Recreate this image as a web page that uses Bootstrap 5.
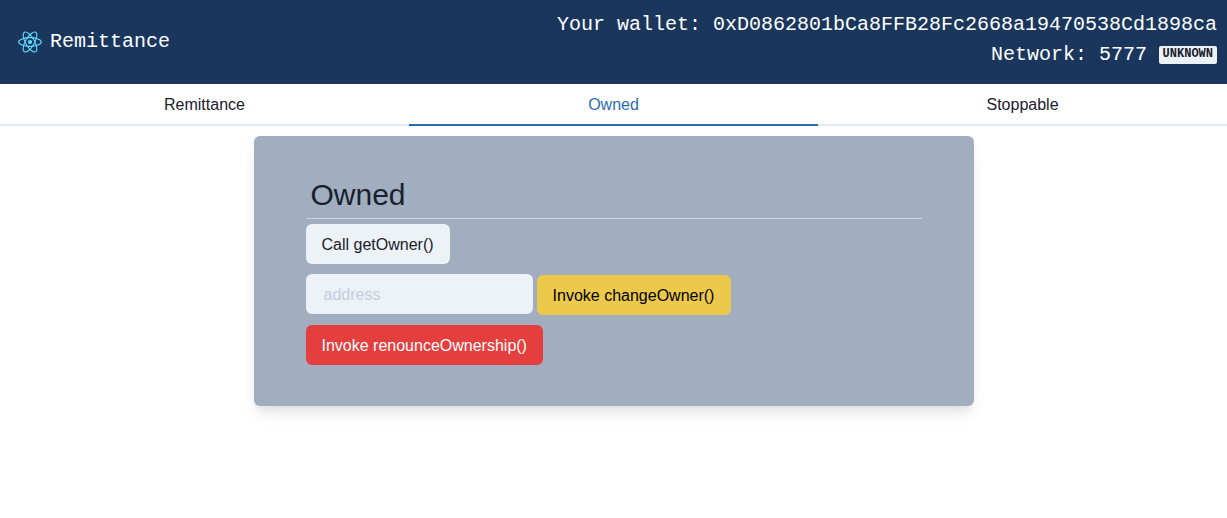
<!DOCTYPE html>
<html lang="en"><head><meta charset="utf-8"><title>Remittance</title>
<meta name="viewport" content="width=device-width, initial-scale=1">
<link href="https://cdn.jsdelivr.net/npm/bootstrap@5.3.0/dist/css/bootstrap.min.css" rel="stylesheet">
<style>
body{font-family:"Liberation Sans",Arial,sans-serif;color:#1a202c;background:#fff}
.topbar{height:84px;padding:0 10px 0 14px;background:#1a365d;color:#fff;font:20px/30px "Liberation Mono",monospace}
.logo{width:32px;height:32px}
.wallet{padding-bottom:5px}
.net-badge{font-size:12px;line-height:17px;font-weight:700;background:#edf2f7;color:#1a202c;border-radius:2px;padding:0 4px 0 3.6px;margin-left:12px;height:18px}
.tabs .nav-link{height:42px;padding:9px 16px 7px;line-height:24px;color:#1a202c;border-radius:0;border-bottom:2px solid #e2e8f0}
.tabs .nav-link.active{color:#2b6cb0;border-color:#2b6cb0}
.panel{width:720px;height:270px;margin-top:10px;padding:40px 52px;background:#a0aec0;border-radius:6px;box-shadow:0 10px 15px -3px rgba(0,0,0,.1),0 4px 6px -2px rgba(0,0,0,.05)}
.panel h1{font-size:30px;line-height:36px;font-weight:400;margin:0 0 5px;padding:1px 5px 5px;border-bottom:1px solid #cbd5e0}
.panel .btn{height:40px;padding:1px 16px 0;border:0;border-radius:6px;font-size:16px;line-height:39px}
.b-light{background:#edf2f7!important;color:#1a202c!important}
.b-yellow{background:#ecc94b!important;color:#000!important}
.b-red{background:#e53e3e!important;color:#fff!important}
.change-row{margin-top:10px;height:41px}
.change-row .btn{width:194px}
.panel .addr{width:227px;height:40px;background:#edf2f7;border:0;border-radius:6px;padding:2px 18px 0;line-height:38px}
.panel .addr::placeholder{color:#c4cddc}
.renounce-row{margin-top:10px}
</style></head><body class="min-vh-100">
<header class="topbar d-flex justify-content-between align-items-center">
<div class="d-flex align-items-center gap-1">
<svg class="logo" viewBox="-16 -16 32 32" fill="none" stroke="#61dafb" stroke-width="1.1"><circle r="2.1" fill="#61dafb" stroke="none"/><ellipse rx="11.3" ry="4.4"/><ellipse rx="11.3" ry="4.4" transform="rotate(60)"/><ellipse rx="11.3" ry="4.4" transform="rotate(120)"/></svg>
<span>Remittance</span></div>
<div class="wallet text-end"><div>Your wallet: 0xD0862801bCa8FFB28Fc2668a19470538Cd1898ca</div>
<div class="d-flex justify-content-end align-items-center">Network: 5777<span class="net-badge">UNKNOWN</span></div></div>
</header>
<nav class="tabs nav nav-fill nav-justified"><a class="nav-link" href="#">Remittance</a><a class="nav-link active" href="#">Owned</a><a class="nav-link" href="#">Stoppable</a></nav>
<main class="panel mx-auto">
<h1>Owned</h1>
<div class="d-flex"><button class="btn b-light">Call getOwner()</button></div>
<div class="change-row d-flex gap-1"><input class="form-control addr align-self-start" placeholder="address" aria-label="address"><button class="btn b-yellow align-self-end">Invoke changeOwner()</button></div>
<div class="renounce-row d-flex"><button class="btn b-red">Invoke renounceOwnership()</button></div>
</main>
<script src="https://cdn.jsdelivr.net/npm/bootstrap@5.3.0/dist/js/bootstrap.bundle.min.js"></script>
</body></html>
